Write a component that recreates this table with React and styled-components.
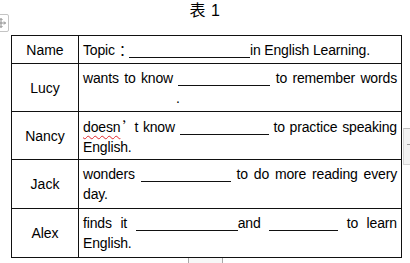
import React from 'react';
import styled, { createGlobalStyle } from 'styled-components';

const GlobalStyle = createGlobalStyle`
    html, body {
        margin: 0;
        padding: 0;
        background: #ffffff;
    }
`

const Page = styled.div`
    position: relative;
    width: 410px;
    height: 263px;
    overflow: hidden;
    background: #ffffff;
    font-family: "Liberation Sans", Arial, "Noto Sans CJK SC", sans-serif;
    color: #000000;
`

const Caption = styled.div`
    height: 35px;
    display: flex;
    justify-content: center;
    align-items: flex-start;
    font-size: 16px;
    line-height: 22px;
    letter-spacing: 0.5px;
`

const Table = styled.table`
    margin-left: 11px;
    width: 391px;
    border-collapse: collapse;
    table-layout: fixed;
    font-size: 14px;
`

const Row = styled.tr`
    height: ${props => props.h}px;
`

const NameCell = styled.td`
    width: 66px;
    border: 1px solid #111111;
    text-align: center;
    vertical-align: middle;
    padding: 0;
    line-height: 20px;
`

const TextCell = styled.td`
    border: 1px solid #111111;
    padding: ${props => props.top ? '0 4px 0 4px' : '4px 4px 0 4px'};
    vertical-align: ${props => props.top ? 'middle' : 'top'};
    line-height: 20px;
    letter-spacing: -0.15px;
    text-align: ${props => props.top ? 'left' : 'justify'};
    text-align-last: ${props => props.last ? 'justify' : 'auto'};
`

const Blank = styled.span`
    display: inline-block;
    width: ${props => props.w}px;
    height: 0;
    border-bottom: 1px solid #111111;
    vertical-align: -3px;
`

const Cjk = styled.span`
    font-family: "Noto Sans CJK SC", sans-serif;
    display: inline-block;
    box-sizing: border-box;
    width: 14px;
    padding-left: ${props => props.shift || 0}px;
    text-align: left;
`

const Misspelt = styled.span`
    text-decoration: underline wavy #e0262b;
    text-decoration-thickness: 1px;
    text-underline-offset: 3px;
`

const Dot = styled.span`
    padding-left: 93px;
`

const MoveHandle = styled.div`
    position: absolute;
    left: -7px;
    top: 14px;
    width: 14px;
    height: 16px;
    border: 1px solid #c4c4c4;
    border-radius: 2px;
    background: #ffffff;
    display: flex;
    align-items: center;
    justify-content: center;
`

const SideTab = styled.div`
    position: absolute;
    left: 403px;
    top: 128px;
    width: 12px;
    height: 35px;
    background: #f3f3f3;
    border-top: 1px solid #bdbdbd;
    border-left: 1px solid #d6d6d6;
    border-bottom: 1px solid #d6d6d6;
    &::after {
        content: '';
        position: absolute;
        left: 3px;
        top: 15px;
        width: 4px;
        height: 1px;
        background: #9a9a9a;
    }
`

const BottomTab = styled.div`
    position: absolute;
    left: 188px;
    top: 258px;
    width: 33px;
    height: 8px;
    background: #f7f7f7;
    border-left: 1px solid #a8a8a8;
    border-right: 1px solid #a8a8a8;
`

function MoveIcon() {
    return (
        <svg width="12" height="12" viewBox="0 0 12 12" fill="none" stroke="#8c8c8c" strokeWidth="1">
            <path d="M6 1.5v9M1.5 6h9" />
            <path d="M4.5 3L6 1.5 7.5 3M4.5 9L6 10.5 7.5 9M3 4.5L1.5 6 3 7.5M9 4.5L10.5 6 9 7.5" />
        </svg>
    );
}

function App() {
    return (
        <Page>
            <GlobalStyle />
            <Caption>表 1</Caption>
            <Table>
                <tbody>
                    <Row h={28}>
                        <NameCell>Name</NameCell>
                        <TextCell top>
                            Topic<Cjk shift={4}>：</Cjk><Blank w={121} />in English Learning.
                        </TextCell>
                    </Row>
                    <Row h={48}>
                        <NameCell>Lucy</NameCell>
                        <TextCell last>
                            wants to know <Blank w={92} /> to remember words
                            <br />
                            <Dot>.</Dot>
                        </TextCell>
                    </Row>
                    <Row h={48}>
                        <NameCell>Nancy</NameCell>
                        <TextCell>
                            <Misspelt>doesn</Misspelt><Cjk shift={2}>’</Cjk>t know <Blank w={89} /> to practice speaking English.
                        </TextCell>
                    </Row>
                    <Row h={49}>
                        <NameCell>Jack</NameCell>
                        <TextCell>
                            wonders <Blank w={90} /> to do more reading every day.
                        </TextCell>
                    </Row>
                    <Row h={49}>
                        <NameCell>Alex</NameCell>
                        <TextCell>
                            finds it <Blank w={102} />and <Blank w={69} /> to learn English.
                        </TextCell>
                    </Row>
                </tbody>
            </Table>
            <MoveHandle><MoveIcon /></MoveHandle>
            <SideTab />
            <BottomTab />
        </Page>
    );
}

export default App;
